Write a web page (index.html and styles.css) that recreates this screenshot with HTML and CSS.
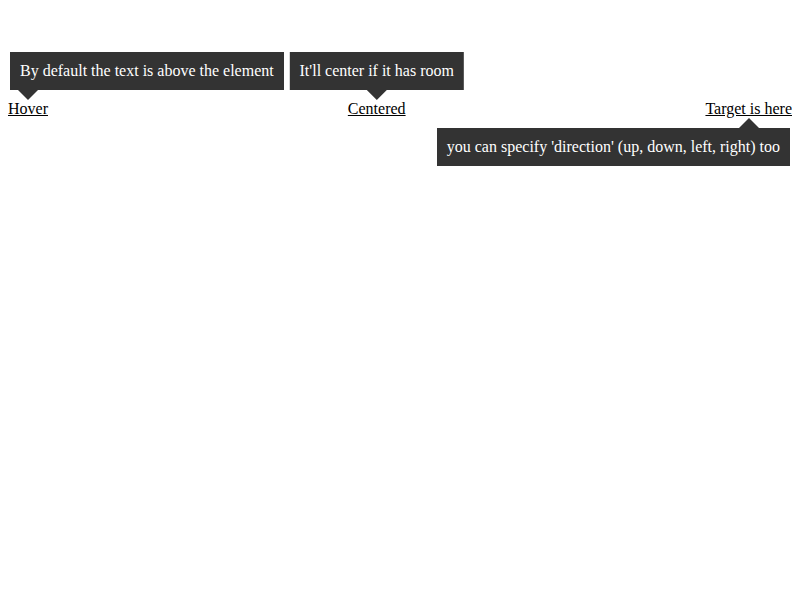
FILE: index.html
```html
<!DOCTYPE html>
<html>
<head>
<meta charset="utf-8">
<link rel="stylesheet" href="styles.css">
</head>
<body>
<div class="row">
  <span class="target">
    <a href="#">Hover</a>
    <span class="tip tip-up tip-left">By default the text is above the element<i class="arrow"></i></span>
  </span>
  <span class="target">
    <a href="#">Centered</a>
    <span class="tip tip-up tip-center">It'll center if it has room<i class="arrow"></i></span>
  </span>
  <span class="target">
    <a href="#">Target is here</a>
  </span>
</div>
<div class="below-row">
  <div class="bubble">you can specify 'direction' (up, down, left, right) too<i class="arrow"></i></div>
</div>
</body>
</html>
```
FILE: styles.css
```css
html, body {
  margin: 0;
  padding: 0;
  background: #fff;
}
body {
  margin: 8px;
  font-family: "Liberation Serif", "Times New Roman", serif;
  font-size: 16px;
  line-height: normal;
  color: #000;
}
.row {
  display: flex;
  justify-content: space-between;
  padding-top: 92px;
}
.target {
  position: relative;
  display: block;
  height: 18px;
  line-height: 18px;
}
.target a {
  color: #000;
  text-decoration: underline;
}
.tip {
  position: absolute;
  z-index: 10;
  display: block;
  background: #333;
  color: #fff;
  padding: 10px;
  white-space: nowrap;
  line-height: 18px;
}
.tip-up { bottom: 28px; }
.tip-left { left: 2px; }
.tip-center { left: 50%; transform: translateX(-50%); }
.below-row {
  display: flex;
  justify-content: flex-end;
  padding-top: 10px;
  padding-right: 2px;
}
.bubble {
  position: relative;
  background: #333;
  color: #fff;
  padding: 10px;
  white-space: nowrap;
  line-height: 18px;
}
.arrow {
  position: absolute;
  display: block;
  width: 0;
  height: 0;
  border-left: 10px solid transparent;
  border-right: 10px solid transparent;
}
.tip-up .arrow {
  top: 100%;
  border-top: 10px solid #333;
}
.bubble .arrow {
  bottom: 100%;
  right: 31px;
  border-bottom: 10px solid #333;
}
.tip-left .arrow { left: 8px; }
.tip-center .arrow { left: 50%; margin-left: -10px; }
```
